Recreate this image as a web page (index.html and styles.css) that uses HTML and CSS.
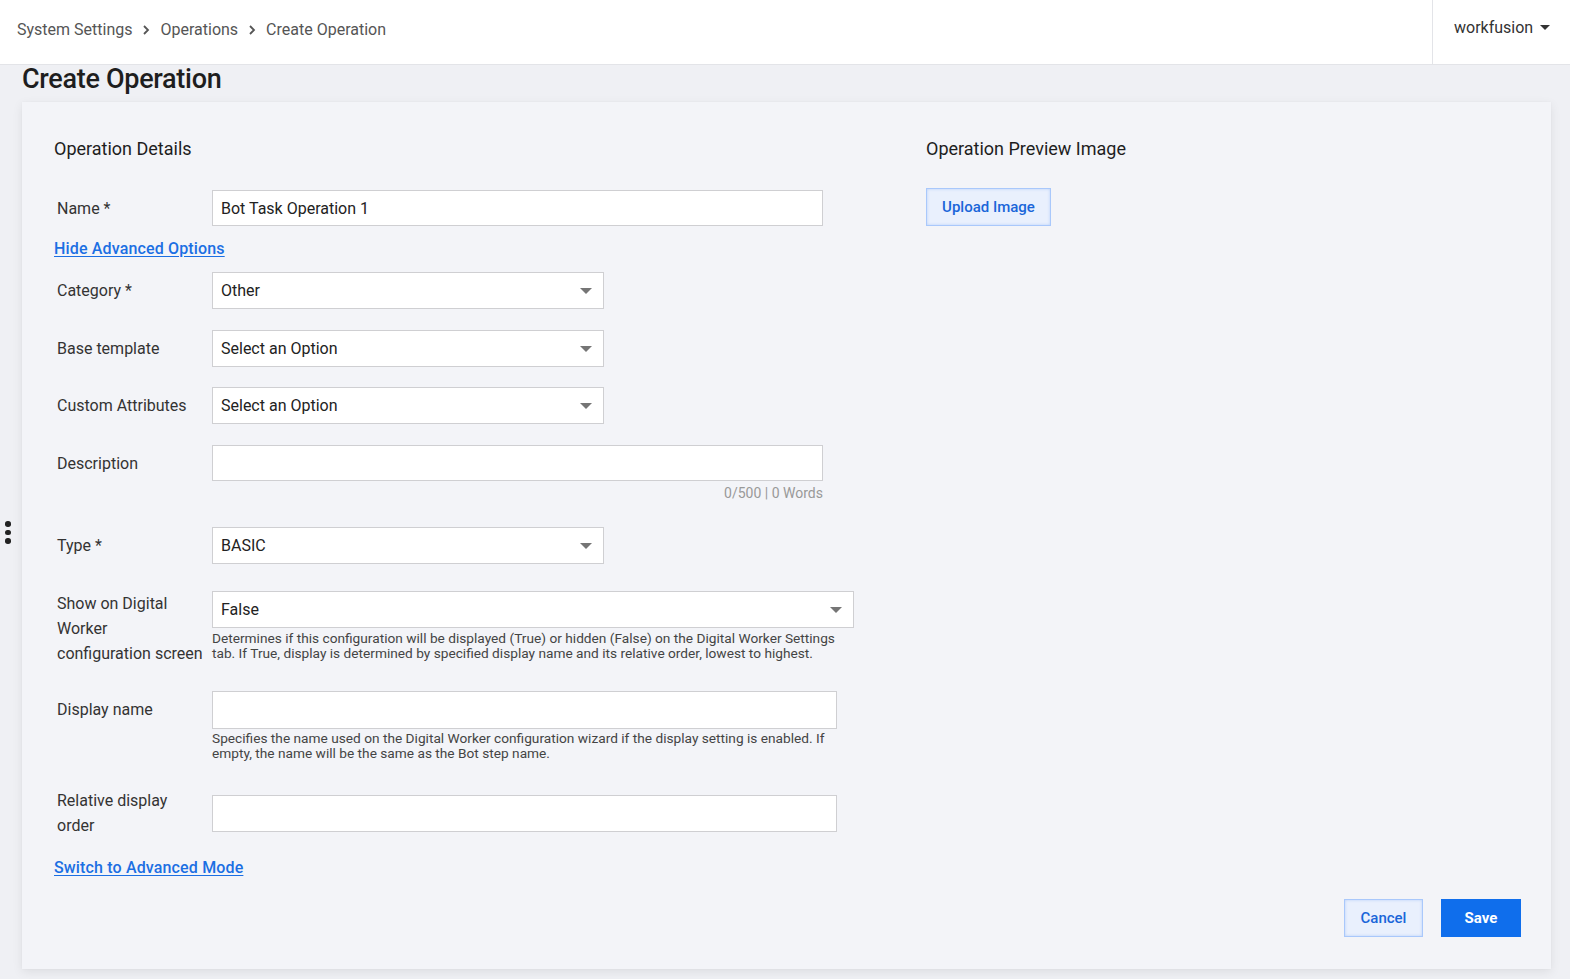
FILE: index.html
```html
<!DOCTYPE html>
<html>
<head>
<meta charset="utf-8">
<link rel="stylesheet" href="styles.css">
</head>
<body>
<header class="topbar">
  <nav class="crumbs">
    <span>System Settings</span>
    <svg class="chev" width="10" height="12" viewBox="0 0 10 12"><path d="M3 2 L7 6 L3 10" fill="none" stroke="#555" stroke-width="1.8"/></svg>
    <span>Operations</span>
    <svg class="chev" width="10" height="12" viewBox="0 0 10 12"><path d="M3 2 L7 6 L3 10" fill="none" stroke="#555" stroke-width="1.8"/></svg>
    <span>Create Operation</span>
  </nav>
  <div class="user">workfusion <span class="caret"></span></div>
</header>

<div class="kebab"><i></i><i></i><i></i></div>

<main class="page">
  <h1 class="title">Create Operation</h1>
  <section class="card">
    <div class="cols">
      <div class="left">
        <h2 class="section-h">Operation Details</h2>

        <div class="row r-name">
          <label class="lbl">Name *</label>
          <div class="fld"><div class="input w610">Bot Task Operation 1</div></div>
        </div>

        <a class="link l-hide" href="#">Hide Advanced Options</a>

        <div class="row r-cat">
          <label class="lbl">Category *</label>
          <div class="fld"><div class="select w391">Other<span class="arrow"></span></div></div>
        </div>

        <div class="row r-base">
          <label class="lbl">Base template</label>
          <div class="fld"><div class="select w391">Select an Option<span class="arrow"></span></div></div>
        </div>

        <div class="row r-custom">
          <label class="lbl">Custom Attributes</label>
          <div class="fld"><div class="select w391">Select an Option<span class="arrow"></span></div></div>
        </div>

        <div class="row r-desc">
          <label class="lbl">Description</label>
          <div class="fld"><div class="input w610 h36"></div></div>
        </div>
        <div class="counter w610">0/500 | 0 Words</div>

        <div class="row r-type">
          <label class="lbl">Type *</label>
          <div class="fld"><div class="select w391">BASIC<span class="arrow"></span></div></div>
        </div>

        <div class="row r-show top">
          <label class="lbl">Show on Digital Worker configuration screen</label>
          <div class="fld">
            <div class="select w641">False<span class="arrow"></span></div>
            <p class="help w641">Determines if this configuration will be displayed (True) or hidden (False) on the Digital Worker Settings tab. If True, display is determined by specified display name and its relative order, lowest to highest.</p>
          </div>
        </div>

        <div class="row r-disp top">
          <label class="lbl pad">Display name</label>
          <div class="fld">
            <div class="input w624 h38"></div>
            <p class="help w624">Specifies the name used on the Digital Worker configuration wizard if the display setting is enabled. If empty, the name will be the same as the Bot step name.</p>
          </div>
        </div>

        <div class="row r-rel">
          <label class="lbl">Relative display order</label>
          <div class="fld"><div class="input w624"></div></div>
        </div>

        <a class="link l-switch" href="#">Switch to Advanced Mode</a>
      </div>

      <div class="right">
        <h2 class="section-h">Operation Preview Image</h2>
        <button class="btn-light upload">Upload Image</button>
      </div>
    </div>

    <div class="actions">
      <button class="btn-light cancel">Cancel</button>
      <button class="btn-primary">Save</button>
    </div>
  </section>
</main>
</body>
</html>
```

FILE: styles.css
```css
* { box-sizing: border-box; }
html, body { margin: 0; padding: 0; }
body {
  background: #eff0f4;
  font-family: Roboto, "Liberation Sans", Arial, sans-serif;
  color: #333;
  width: 1570px;
  height: 979px;
  overflow: hidden;
  position: relative;
}

.topbar {
  height: 65px;
  background: #fff;
  border-bottom: 1px solid #e3e4e8;
  display: flex;
  justify-content: space-between;
  align-items: stretch;
}
.crumbs {
  display: flex;
  align-items: center;
  gap: 9px;
  padding-left: 17px;
  padding-bottom: 5px;
  font-size: 16px;
  color: #555;
}
.chev { display: block; margin: 0; }
.user {
  width: 138px;
  border-left: 1px solid #e3e4e8;
  display: flex;
  align-items: center;
  padding-left: 21px;
  padding-bottom: 10px;
  font-size: 16px;
  color: #333;
}
.caret {
  display: inline-block;
  width: 0; height: 0;
  border-left: 5px solid transparent;
  border-right: 5px solid transparent;
  border-top: 5px solid #333;
  margin-left: 7px;
  margin-top: 1px;
}

.kebab {
  position: absolute;
  left: 5px;
  top: 521px;
  display: flex;
  flex-direction: column;
  gap: 3px;
}
.kebab i {
  display: block;
  width: 5.5px; height: 5.5px;
  border-radius: 50%;
  background: #222;
}

.page { padding: 0 19px 0 22px; }
.title {
  margin: 0;
  height: 37px;
  line-height: 28px;
  font-size: 27px;
  font-weight: 500;
  color: #1e1e1e;
  letter-spacing: -0.3px;
}

.card {
  width: 1529px;
  height: 867px;
  background: #f3f4f8;
  box-shadow: 0 3px 10px rgba(0,0,0,0.08), 0 0 2px rgba(0,0,0,0.03);
  padding: 35px 30px 32px 32px;
  display: flex;
  flex-direction: column;
  justify-content: space-between;
}
.cols {
  display: grid;
  grid-template-columns: 872px 1fr;
}
.left, .right { display: flex; flex-direction: column; align-items: flex-start; }

.section-h {
  margin: 0;
  font-size: 18px;
  line-height: 26px;
  font-weight: 400;
  color: #1e1e1e;
}

.row { display: flex; align-items: center; }
.row.top { align-items: flex-start; }
.lbl {
  width: 158px;
  padding-left: 3px;
  padding-right: 7px;
  font-size: 16px;
  line-height: 25px;
  color: #333;
  flex: none;
}
.lbl.pad { padding-top: 6.5px; }
.r-show .lbl { margin-top: -0.5px; }

.fld { display: flex; flex-direction: column; }
.input, .select {
  height: 37px;
  background: #fff;
  border: 1px solid #cfcfd2;
  font-size: 16px;
  color: #222;
  padding: 0 8px;
  display: flex;
  align-items: center;
  position: relative;
}
.h36 { height: 36px; }
.h38 { height: 38px; }
.w610 { width: 611px; }
.w391 { width: 392px; }
.w641 { width: 642px; }
.w624 { width: 625px; }
.r-name .input { height: 36px; }

.arrow {
  position: absolute;
  right: 11px;
  top: 15px;
  width: 0; height: 0;
  border-left: 6px solid transparent;
  border-right: 6px solid transparent;
  border-top: 6px solid #757575;
}

.help {
  margin: 0;
  font-size: 13.7px;
  line-height: 15px;
  color: #444;
  padding-top: 2.5px;
}

.counter {
  margin-left: 158px;
  text-align: right;
  font-size: 14px;
  line-height: 16px;
  color: #999;
  margin-top: 4px;
}

.link {
  color: #1b6fe3;
  font-size: 16px;
  font-weight: 500;
  line-height: 20px;
  letter-spacing: 0.15px;
  text-decoration: underline;
  text-underline-offset: 2px;
}

.section-h { margin-top: -1px; }
.r-name { margin-top: 28px; }
.l-hide { margin-top: 13px; }
.r-cat { margin-top: 13px; }
.r-base { margin-top: 21px; }
.r-custom { margin-top: 20px; }
.r-desc { margin-top: 21px; }
.r-type { margin-top: 26px; }
.r-show { margin-top: 27px; }
.r-disp { margin-top: 25px; }
.r-rel { margin-top: 27px; }
.l-switch { margin-top: 20px; }

.btn-light {
  font-family: Roboto, "Liberation Sans", Arial, sans-serif;
  background: #e9f0fd;
  border: 1px solid #a9c8fb;
  box-shadow: inset 0 0 3px rgba(120,165,245,0.45);
  color: #1a66d9;
  font-size: 15px;
  font-weight: 500;
  height: 38px;
  padding: 0;
  cursor: pointer;
}
.upload { width: 125px; margin-top: 26px; }
.actions {
  display: flex;
  justify-content: flex-end;
  gap: 18px;
}
.cancel { width: 79px; }
.btn-primary {
  font-family: Roboto, "Liberation Sans", Arial, sans-serif;
  background: #0f6eec;
  border: none;
  color: #fff;
  font-size: 15px;
  font-weight: 700;
  height: 38px;
  width: 80px;
  padding: 0;
}
```
